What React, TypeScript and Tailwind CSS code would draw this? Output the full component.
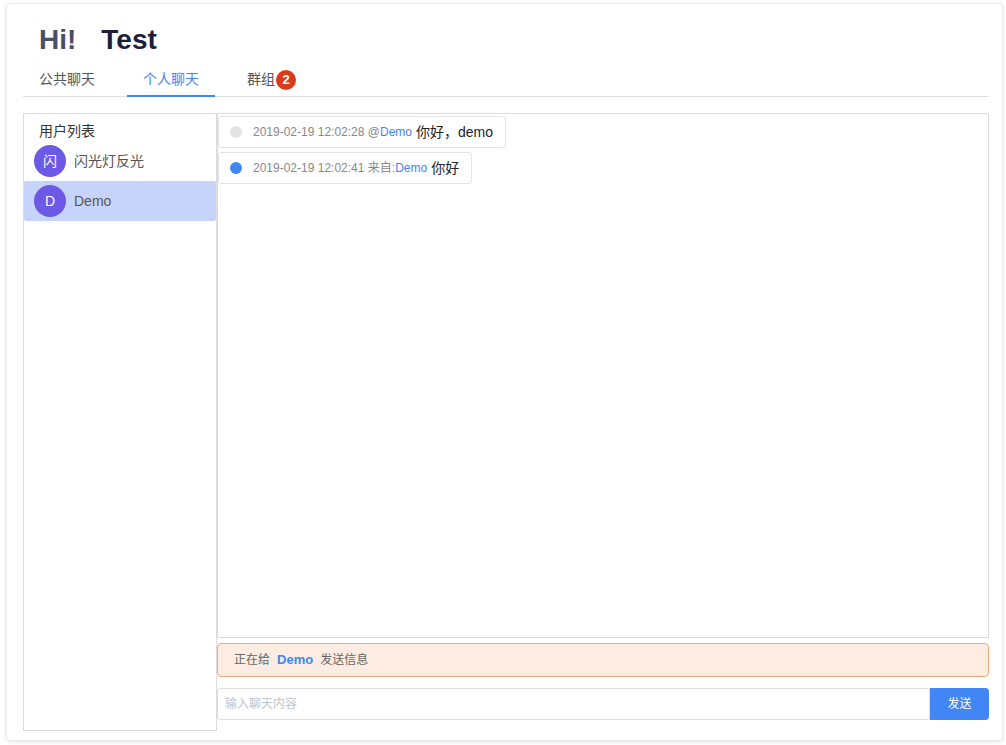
import React, { useState } from 'react';

interface ChatUser {
  id: string;
  name: string;
  avatar: string;
}

interface Message {
  id: number;
  time: string;
  prefix: string;
  who: string;
  text: string;
  read: boolean;
}

const users: ChatUser[] = [
  { id: 'u1', name: '闪光灯反光', avatar: '闪' },
  { id: 'u2', name: 'Demo', avatar: 'D' },
];

const messages: Message[] = [
  { id: 1, time: '2019-02-19 12:02:28', prefix: '@', who: 'Demo', text: '你好，demo', read: true },
  { id: 2, time: '2019-02-19 12:02:41', prefix: '来自:', who: 'Demo', text: '你好', read: false },
];

const tabs = [
  { key: 'public', label: '公共聊天', badge: 0 },
  { key: 'private', label: '个人聊天', badge: 0 },
  { key: 'group', label: '群组', badge: 2 },
];

export default function App() {
  const [activeTab, setActiveTab] = useState('private');
  const [selected, setSelected] = useState('u2');
  const [draft, setDraft] = useState('');
  const current = users.find(u => u.id === selected);

  return (
    <div
      className="w-[1006px] h-[745px] bg-white pl-[6px] pr-[3px] pt-[3px] pb-[4px]"
      style={{ fontFamily: '"Liberation Sans", "Noto Sans CJK SC", sans-serif' }}
    >
      <div className="h-full flex flex-col rounded-[4px] border border-[#ececec] shadow-[0_1px_4px_rgba(0,0,0,0.12)] pl-[16px] pr-[13px] pt-[18px] pb-[9px]">
        <h1 className="pl-[16px] text-[28px] leading-[36px] font-bold">
          <span className="text-[#4b4f66]">Hi!</span>
          <span className="ml-[25px] text-[#1d1e3a]">Test</span>
        </h1>

        <div className="mt-[6px] flex gap-4 border-b border-[#dcdfe6]">
          {tabs.map(tab => (
            <button
              key={tab.key}
              onClick={() => setActiveTab(tab.key)}
              className={
                'relative -mb-px h-[33px] w-[88px] border-b-2 pl-4 text-left text-[14px] ' +
                (activeTab === tab.key
                  ? 'border-[#4285f4] text-[#4285f4]'
                  : 'border-transparent text-[#555]')
              }
            >
              <span className="inline-flex items-center">
                {tab.label}
                {tab.badge > 0 && (
                  <span className="ml-px flex h-[20px] w-[20px] items-center justify-center rounded-full bg-[#dc3b1b] text-[13px] font-bold text-white">
                    {tab.badge}
                  </span>
                )}
              </span>
            </button>
          ))}
        </div>

        <div className="mt-[16px] flex flex-1 min-h-0">
          <div className="w-[194px] shrink-0 border border-[#dcdcdc]">
            <div className="pl-[15px] pt-[7px] text-[14px] leading-[20px] text-[#333]">用户列表</div>
            {users.map(user => (
              <button
                key={user.id}
                onClick={() => setSelected(user.id)}
                className={
                  'flex h-[40px] w-full items-center gap-2 rounded-[2px] pl-[10px] text-[14px] text-[#555] ' +
                  (selected === user.id ? 'bg-[#c6d4fb]' : '')
                }
              >
                <span className="flex h-[32px] w-[32px] items-center justify-center rounded-full bg-[#6c59e6] text-[14px] text-white">
                  {user.avatar}
                </span>
                <span>{user.name}</span>
              </button>
            ))}
          </div>

          <div className="flex flex-1 flex-col pb-[11px]">
            <div className="flex-1 border border-[#dcdcdc] pt-[2px]">
              {messages.map(m => (
                <div
                  key={m.id}
                  className="mb-[4px] flex h-[32px] w-fit items-center rounded-[3px] border border-[#e4e4e4] pl-[11px] pr-[12px]"
                >
                  <span className={'h-[12px] w-[12px] rounded-full ' + (m.read ? 'bg-[#e4e4e7]' : 'bg-[#4285f4]')} />
                  <span className="ml-[11px] text-[12px] text-[#888]">
                    {m.time} {m.prefix}
                    <span className="text-[#4285f4]">{m.who}</span>
                  </span>
                  <span className="ml-[4px] text-[14px] text-[#222]">{m.text}</span>
                </div>
              ))}
            </div>

            <div className="mt-[5px] flex h-[34px] items-center rounded-[4px] border border-[#f3a57e] bg-[#fcece1] pl-[16px] text-[12px] text-[#666]">
              正在给
              <span className="mx-[7px] text-[13px] font-bold text-[#4285f4]">{current?.name}</span>
              发送信息
            </div>

            <div className="mt-[11px] flex h-[32px]">
              <input
                value={draft}
                onChange={e => setDraft(e.target.value)}
                placeholder="输入聊天内容"
                className="h-full flex-1 rounded-l-[4px] border border-[#dcdcdc] pl-[7px] text-[12px] text-[#333] outline-none placeholder:text-[#c0c4cc]"
              />
              <button className="h-full w-[59px] rounded-r-[4px] bg-[#4285f4] text-[12px] text-white">发送</button>
            </div>
          </div>
        </div>
      </div>
    </div>
  );
}
